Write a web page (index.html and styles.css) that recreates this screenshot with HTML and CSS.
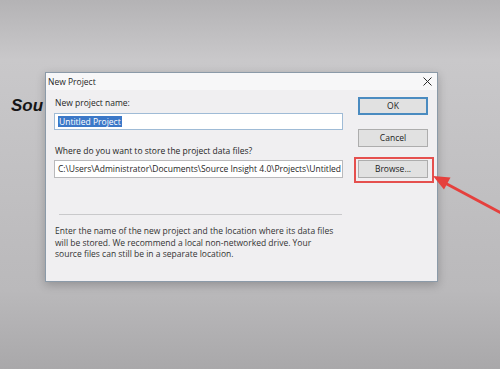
FILE: index.html
```html
<!DOCTYPE html>
<html lang="en">
  <head>
    <meta charset="UTF-8" />
    <title>New Project</title>
    <link rel="stylesheet" href="styles.css">
  </head>

  <body>
    <div class="stage">
      <!-- 背后的标题 -->
      <div class="behind">Sou</div>

      <!-- 对话框 -->
      <div class="dialog">
        <div class="titlebar">
          <span>New Project</span>
          <svg class="close" width="9" height="9" viewBox="0 0 9 9">
            <path d="M0.5 0.5 L8.5 8.5 M8.5 0.5 L0.5 8.5" stroke="#2b2b2b" stroke-width="1" />
          </svg>
        </div>

        <div class="content">
          <div class="fields">
            <div class="label">New project name:</div>
            <div class="input focus"><span class="sel">Untitled Project</span></div>

            <div class="label second">Where do you want to store the project data files?</div>
            <div class="input">C:\Users\Administrator\Documents\Source Insight 4.0\Projects\Untitled</div>

            <div class="sep"></div>

            <p class="note">
              Enter the name of the new project and the location where its data files<br />
              will be stored. We recommend a local non-networked drive. Your<br />
              source files can still be in a separate location.
            </p>
          </div>

          <div class="buttons">
            <div class="btn ok">OK</div>
            <div class="btn">Cancel</div>
            <div class="btn browse">Browse...</div>
          </div>
        </div>
      </div>

      <!-- 红色箭头 -->
      <svg class="arrow" width="500" height="369" viewBox="0 0 500 369">
        <line x1="445" y1="183" x2="503" y2="214" stroke="#e5403d" stroke-width="3" />
        <polygon points="433,176 444,189.5 450.5,177.5" fill="#e5403d" />
      </svg>
    </div>
  </body>
</html>
```

FILE: styles.css
```css
* {
  margin: 0;
  padding: 0;
  box-sizing: border-box;
}

body {
  font-family: "Open Sans", "Noto Sans", sans-serif;
  background: #aaa9ab;
}

/* 整个画面 */
.stage {
  position: relative;
  width: 500px;
  height: 369px;
  padding: 72px 0 0 45px;
  overflow: hidden;
  background: linear-gradient(#b4b3b5 0, #c9c8ca 60px, #bab9bb 290px, #a9a8aa 369px);
}

/* 被对话框挡住的标题 */
.behind {
  position: absolute;
  left: 11px;
  top: 96px;
  font-family: "Liberation Sans", Arial, sans-serif;
  font-weight: bold;
  font-style: italic;
  font-size: 17px;
  color: #161616;
}

.dialog {
  position: relative;
  z-index: 1;
  width: 393px;
  height: 210px;
  border: 1px solid #8b9aa8;
  background: #f0eff1;
  box-shadow: 0 3px 9px rgba(0, 0, 0, 0.22);
  font-size: 8.5px;
  color: #1f1f1f;
}

.titlebar {
  display: flex;
  align-items: center;
  justify-content: space-between;
  height: 17px;
  padding: 0 5px 0 2px;
  background: #f7f7f8;
}

.content {
  display: flex;
  gap: 15px;
  padding: 7px 0 0 8px;
}

.fields {
  width: 289px;
}

.label {
  height: 12px;
  line-height: 12px;
  margin-bottom: 4px;
  padding-left: 1px;
}

.label.second {
  margin-top: 15px;
  margin-bottom: 3px;
}

.input {
  height: 18px;
  line-height: 16px;
  padding-left: 3px;
  border: 1px solid #b9b9bb;
  background: #fff;
  white-space: nowrap;
  overflow: hidden;
}

.input.focus {
  height: 17px;
  border-color: #9fbbd6;
}

.sel {
  display: inline-block;
  height: 11px;
  line-height: 11px;
  padding: 0 1px;
  background: #3b78c8;
  color: #fff;
}

.sep {
  margin: 36px 1px 0 5px;
  height: 1px;
  background: #c9c9cb;
}

.note {
  margin-top: 10px;
  line-height: 11.5px;
  color: #333;
  padding-left: 1px;
}

/* 右边按钮 */
.buttons {
  display: flex;
  flex-direction: column;
  width: 70px;
}

.btn {
  position: relative;
  height: 18px;
  line-height: 16px;
  text-align: center;
  border: 1px solid #adadad;
  background: #e1e1e1;
  color: #222;
}

.btn.ok {
  border: 2px solid #4a8bc0;
  line-height: 14px;
  margin-bottom: 14px;
}

.btn.browse {
  margin-top: 13px;
}

/* 红框标注 */
.btn.browse::after {
  content: "";
  position: absolute;
  top: -4px;
  left: -5px;
  right: -7px;
  bottom: -6px;
  border: 2px solid #e5504e;
}

.arrow {
  position: absolute;
  left: 0;
  top: 0;
  z-index: 2;
}
```
